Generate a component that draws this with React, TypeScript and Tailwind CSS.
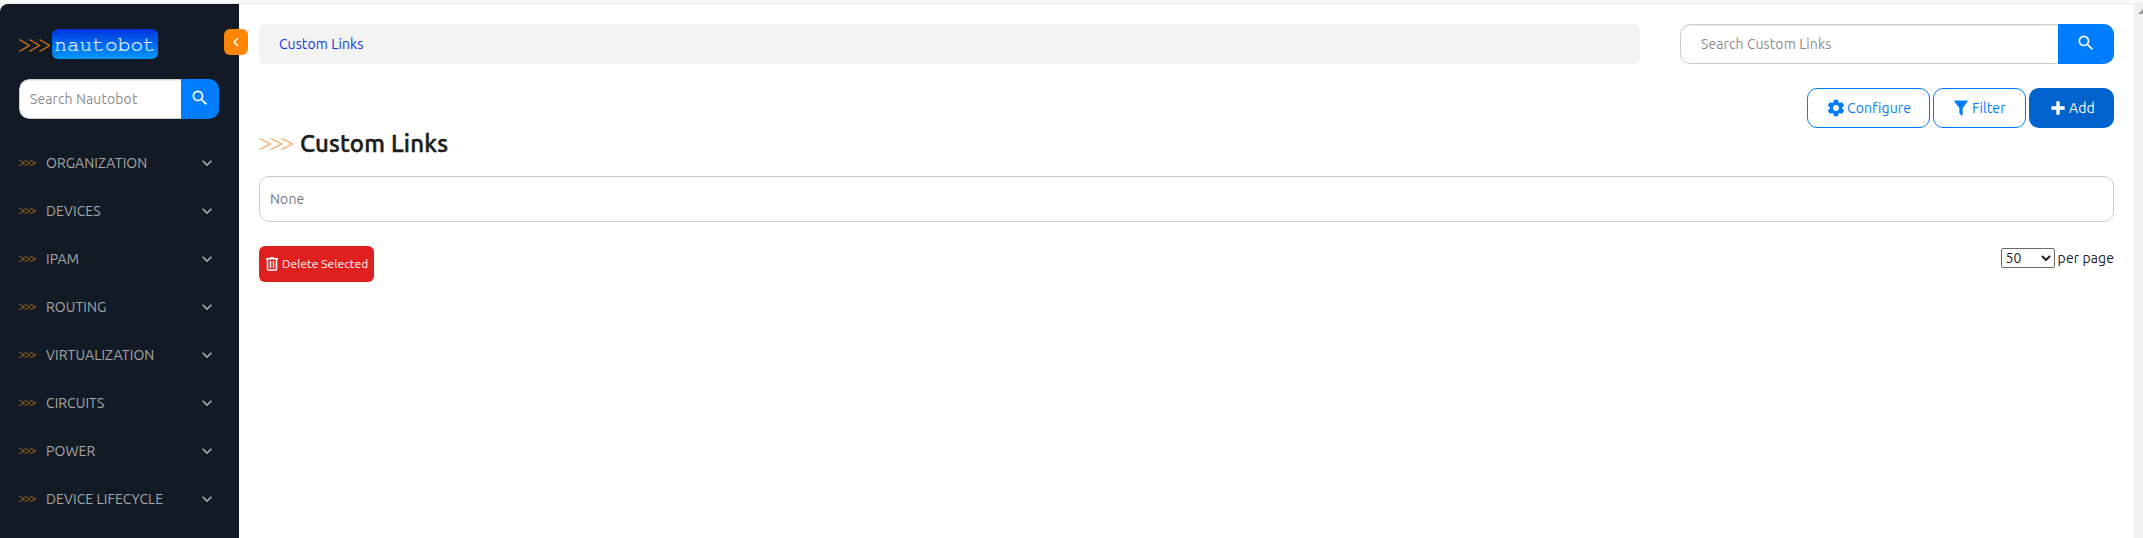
import React from "react";

const paths = {
  magnify:
    "M9.5,3A6.5,6.5 0 0,1 16,9.5C16,11.11 15.41,12.59 14.44,13.73L14.71,14H15.5L20.5,19L19,20.5L14,15.5V14.71L13.73,14.44C12.59,15.41 11.11,16 9.5,16A6.5,6.5 0 0,1 3,9.5A6.5,6.5 0 0,1 9.5,3M9.5,5C7,5 5,7 5,9.5C5,12 7,14 9.5,14C12,14 14,12 14,9.5C14,7 12,5 9.5,5Z",
  cog: "M12,15.5A3.5,3.5 0 0,1 8.5,12A3.5,3.5 0 0,1 12,8.5A3.5,3.5 0 0,1 15.5,12A3.5,3.5 0 0,1 12,15.5M19.43,12.97C19.47,12.65 19.5,12.33 19.5,12C19.5,11.67 19.47,11.34 19.43,11L21.54,9.37C21.73,9.22 21.78,8.95 21.66,8.73L19.66,5.27C19.54,5.05 19.27,4.96 19.05,5.05L16.56,6.05C16.04,5.66 15.5,5.32 14.87,5.07L14.5,2.42C14.46,2.18 14.25,2 14,2H10C9.75,2 9.54,2.18 9.5,2.42L9.13,5.07C8.5,5.32 7.96,5.66 7.44,6.05L4.95,5.05C4.73,4.96 4.46,5.05 4.34,5.27L2.34,8.73C2.21,8.95 2.27,9.22 2.46,9.37L4.57,11C4.53,11.34 4.5,11.67 4.5,12C4.5,12.33 4.53,12.65 4.57,12.97L2.46,14.63C2.27,14.78 2.21,15.05 2.34,15.27L4.34,18.73C4.46,18.95 4.73,19.03 4.95,18.95L7.44,17.94C7.96,18.34 8.5,18.68 9.13,18.93L9.5,21.58C9.54,21.82 9.75,22 10,22H14C14.25,22 14.46,21.82 14.5,21.58L14.87,18.93C15.5,18.67 16.04,18.34 16.56,17.94L19.05,18.95C19.27,19.03 19.54,18.95 19.66,18.73L21.66,15.27C21.78,15.05 21.73,14.78 21.54,14.63L19.43,12.97Z",
  filter:
    "M14,12V19.88C14.04,20.18 13.94,20.5 13.71,20.71C13.32,21.1 12.69,21.1 12.3,20.71L10.29,18.7C10.06,18.47 9.96,18.16 10,17.87V12H9.97L4.21,4.62C3.87,4.19 3.95,3.56 4.38,3.22C4.57,3.08 4.78,3 5,3H19C19.22,3 19.43,3.08 19.62,3.22C20.05,3.56 20.13,4.19 19.79,4.62L14.03,12H14Z",
  plus: "M20 14H14V20H10V14H4V10H10V4H14V10H20V14Z",
  trash:
    "M9,3V4H4V6H5V19A2,2 0 0,0 7,21H17A2,2 0 0,0 19,19V6H20V4H15V3H9M7,6H17V19H7V6M9,8V17H11V8H9M13,8V17H15V8H13Z",
  chevronDown: "M7.41,8.58L12,13.17L16.59,8.58L18,10L12,16L6,10L7.41,8.58Z",
  chevronLeft: "M15.41,16.58L10.83,12L15.41,7.41L14,6L8,12L14,18L15.41,16.58Z",
};

function Icon({ name, className }: { name: keyof typeof paths; className: string }) {
  return (
    <svg viewBox="0 0 24 24" fill="currentColor" className={`shrink-0 ${className}`}>
      <path d={paths[name]} />
    </svg>
  );
}

function Arrows({ className, stroke }: { className: string; stroke: number }) {
  return (
    <svg
      viewBox="0 0 34 13"
      preserveAspectRatio="none"
      fill="none"
      stroke="currentColor"
      strokeWidth={stroke}
      className={`shrink-0 ${className}`}
    >
      <path vectorEffect="non-scaling-stroke" d="M0.3 0.6L11.4 6.5L0.3 12.4M11.4 0.6L22.5 6.5L11.4 12.4M22.5 0.6L33.6 6.5L22.5 12.4" />
    </svg>
  );
}

const menu = [
  "ORGANIZATION",
  "DEVICES",
  "IPAM",
  "ROUTING",
  "VIRTUALIZATION",
  "CIRCUITS",
  "POWER",
  "DEVICE LIFECYCLE",
];

function Sidebar() {
  return (
    <aside className="relative flex h-[534px] w-[239px] shrink-0 flex-col rounded-tl-[8px] bg-[#121a25]">
      <div className="mt-[25px] ml-[19px] flex h-[30px] items-center">
        <Arrows className="mt-[3px] h-[13px] w-[31px] text-[#e87d0e]" stroke={1.1} />
        <div className="ml-[2px] flex h-[30px] w-[106px] items-center justify-center rounded-[6px] bg-linear-to-b from-[#0b2fdd] to-[#0096ff] pt-[2px] font-['Courier_10_Pitch','Nimbus_Mono_PS','FreeMono','Liberation_Mono',monospace] text-[21px] leading-[28px] tracking-[0.1px] text-[#e6f1ff] [-webkit-text-stroke:0.2px_#e6f1ff]">
          nautobot
        </div>
      </div>
      <div className="mt-[20px] ml-[19px] flex h-[40px] w-[200px] overflow-hidden rounded-[10px]">
        <div className="flex flex-1 items-center rounded-l-[10px] border border-r-0 border-[#ccc] bg-white pl-[10px] text-[14px] text-[#8c8c8c] shadow-[inset_0_1px_1px_rgba(0,0,0,0.08)]">
          Search Nautobot
        </div>
        <button className="flex w-[38px] items-center justify-center bg-[#007dff] text-white">
          <Icon name="magnify" className="mb-[2px] size-[20px]" />
        </button>
      </div>
      <nav className="mt-[20px] flex flex-col">
        {menu.map((label) => (
          <div key={label} className="flex h-[48px] items-center pr-[22px] pl-[19px] text-[14px] text-[#a8a8a6]">
            <Arrows className="h-[6px] w-[17px] text-[#a6600f]" stroke={1} />
            <span className="ml-[10px] flex-1 whitespace-nowrap">{label}</span>
            <Icon name="chevronDown" className="size-[20px]" />
          </div>
        ))}
      </nav>
      <button className="absolute top-[25px] left-[224px] flex h-[26px] w-[24px] items-center justify-center rounded-[6px] bg-[#ff8504] text-white">
        <Icon name="chevronLeft" className="size-[18px]" />
      </button>
    </aside>
  );
}

export default function App() {
  return (
    <div className="flex h-[538px] w-[2143px] flex-col overflow-hidden bg-white font-['Ubuntu','Noto_Sans',sans-serif] text-[14px] tracking-[0.1px]">
      <div className="h-[4px] shrink-0 border-b border-[#ebebeb] bg-[#f9f9f9]" />
      <div className="flex">
        <Sidebar />
        <main className="flex h-[534px] w-[1895px] flex-col pr-[20px] pl-[20px]">
          <div className="mt-[20px] flex h-[40px] gap-[40px]">
            <div className="flex w-[1381px] items-center rounded-[6px] bg-[#f3f3f3] pl-[20px] text-[#0f38df]">
              Custom Links
            </div>
            <div className="flex flex-1">
              <div className="flex flex-1 items-center rounded-l-[10px] border border-r-0 border-[#ccc] pl-[20px] text-[#8c8c8c] shadow-[inset_0_1px_1px_rgba(0,0,0,0.08)]">
                Search Custom Links
              </div>
              <button className="flex w-[56px] items-center justify-center rounded-r-[10px] bg-[#007dff] text-white">
                <Icon name="magnify" className="mb-[2px] size-[20px]" />
              </button>
            </div>
          </div>
          <div className="mt-[24px] flex h-[40px] justify-end gap-[3px]">
            <button className="flex w-[123px] items-center rounded-[10px] border border-[#007dff] pl-[18px] text-[#007dff]">
              <Icon name="cog" className="mb-[1px] size-[20px]" />
              <span className="ml-[1px]">Configure</span>
            </button>
            <button className="flex w-[93px] items-center rounded-[10px] border border-[#007dff] pl-[17px] text-[#007dff]">
              <Icon name="filter" className="mb-[1px] size-[20px]" />
              <span className="ml-[1px]">Filter</span>
            </button>
            <button className="flex w-[85px] items-center rounded-[10px] bg-[#0062cc] pl-[19px] text-white">
              <Icon name="plus" className="mb-[1px] size-[20px]" />
              <span className="ml-[1px]">Add</span>
            </button>
          </div>
          <div className="flex h-[48px] items-center">
            <h1 className="-mt-[16px] flex h-[32px] items-center text-[24px] font-medium text-[#1c1c1c]">
              <Arrows className="h-[12px] w-[34px] text-[#f8a14a]" stroke={1.1} />
              <span className="ml-[7px] tracking-[0.2px] [-webkit-text-stroke:0.5px_#1c1c1c]">Custom Links</span>
            </h1>
          </div>
          <div className="flex h-[46px] items-center rounded-[10px] border border-[#ccc] pl-[10px] text-[#777]">None</div>
          <div className="mt-[24px] flex h-[36px] justify-between">
            <button className="flex w-[115px] items-center rounded-[6px] bg-[#e01f1f] pl-[4px] text-[12px] text-white">
              <Icon name="trash" className="size-[18px]" />
              <span className="ml-[1px] tracking-[0.05px] whitespace-nowrap">Delete Selected</span>
            </button>
            <div className="mt-[2px] flex h-[20px] items-center text-[#1c1c1c]">
              <div className="flex h-[20px] w-[54px] items-center justify-between rounded-[2px] border border-[#6b6b6b] pr-[3px] pl-[4px]">
                <span className="leading-[18px]">50</span>
                <svg viewBox="0 0 10 6" className="h-[6px] w-[10px]" fill="none" stroke="#1c1c1c" strokeWidth="2">
                  <path d="M1 1L5 5L9 1" />
                </svg>
              </div>
              <span className="ml-[3px]">per page</span>
            </div>
          </div>
        </main>
        <div className="flex h-[534px] w-[9px] bg-[#f0f0f0]">
          <svg viewBox="0 0 9 10" className="h-[10px] w-[9px]">
            <path d="M4 10L9 5V10Z" fill="#9a9a9a" />
          </svg>
        </div>
      </div>
    </div>
  );
}
